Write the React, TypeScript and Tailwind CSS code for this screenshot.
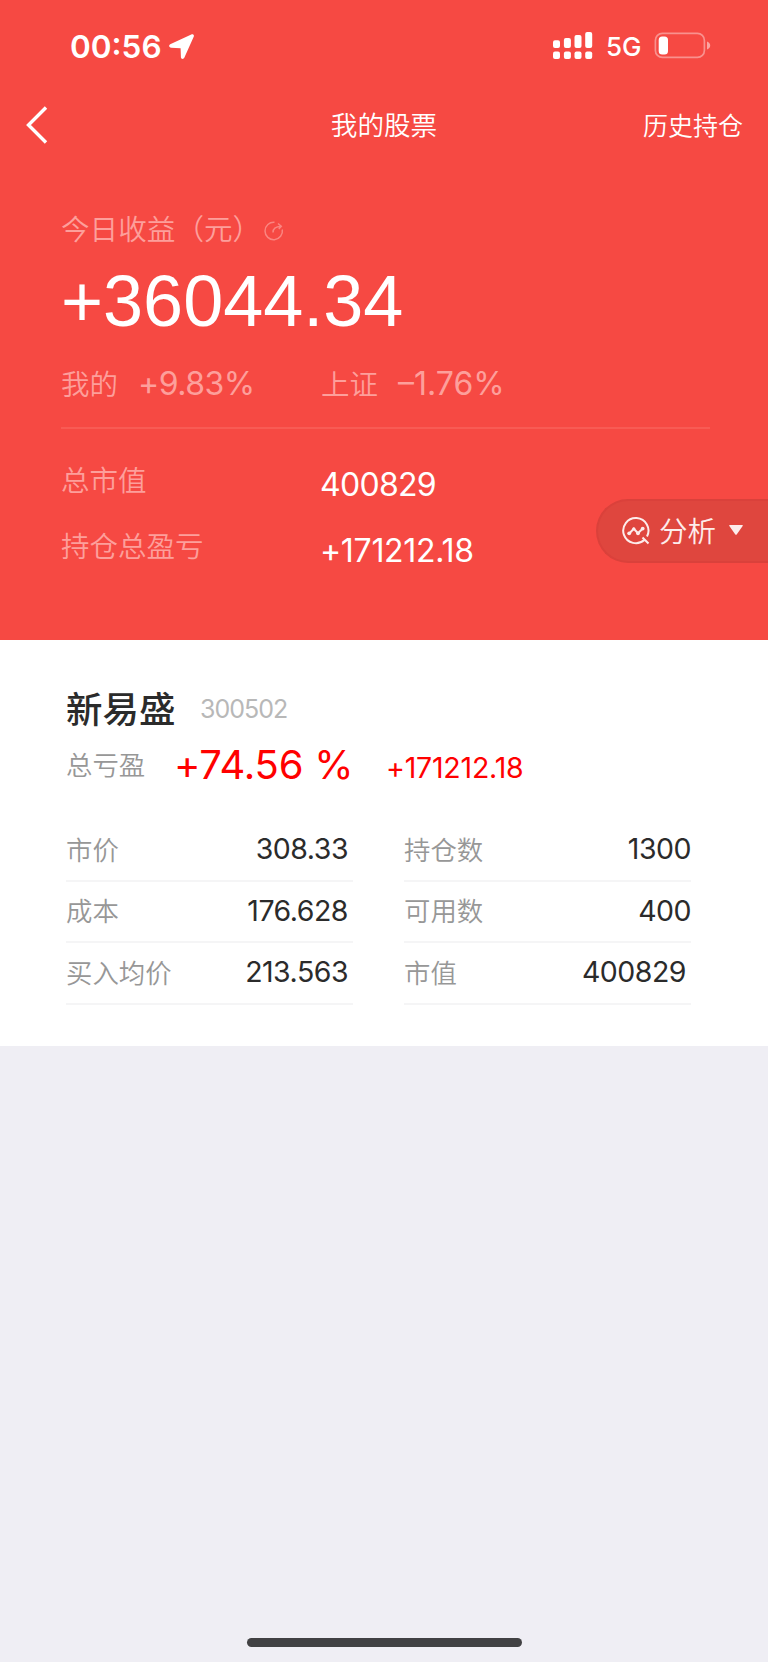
import React from "react";

const cjk = "font-['Noto_Sans_CJK_SC',sans-serif] font-[350] whitespace-nowrap leading-none";
const num = "font-['Inter',sans-serif] whitespace-nowrap leading-none";

function StatusBar() {
  return (
    <div className="flex h-[80px] items-start pt-[30px] text-white">
      <div className={`${num} ml-[70px] mt-[1px] h-[32px] w-[99px] text-[31.500px] font-semibold`}>00:56</div>
      <svg className="mt-[4px] h-[26px] w-[26px]" viewBox="0 0 26 26" fill="currentColor">
        <path d="M1.2 10.2 22.3.4c1.8-.8 3.2.6 2.4 2.4L15.3 23.8c-.8 1.7-3.3 1.3-3.4-.6l-.3-9-9.4-.5c-2.200-.2-2.800-2.600-1-3.500Z" />
      </svg>
      <svg className="ml-[358px] mt-[2px] h-[28px] w-[40px]" viewBox="0 0 40 28" fill="currentColor">
        <rect x="0" y="8.200" width="7" height="7.800" rx="2" />
        <rect x="10.900" y="6" width="7" height="10" rx="2" />
        <rect x="21.500" y="3" width="7" height="13" rx="2" />
        <rect x="32.200" y="0" width="7" height="16" rx="2" />
        <rect x="0" y="19.600" width="7" height="7.400" rx="2" />
        <rect x="10.900" y="19.600" width="7" height="7.400" rx="2" />
        <rect x="21.500" y="19.600" width="7" height="7.400" rx="2" />
        <rect x="32.200" y="19.600" width="7" height="7.400" rx="2" />
      </svg>
      <div className={`${num} ml-[13px] mt-[4px] w-[48px] text-[26px] font-medium`}>5G</div>
      <svg className="mt-[2px] h-[27px] w-[58px]" viewBox="0 0 58 27">
        <rect x="1.400" y="1.400" width="49" height="24" rx="7" fill="none" stroke="white" strokeOpacity=".4" strokeWidth="1.700" />
        <rect x="4.700" y="4.500" width="9.300" height="18" rx="3.500" fill="white" />
        <path d="M53 9.500c4.300 1.500 4.300 6.500 0 8Z" fill="white" fillOpacity=".5" />
      </svg>
    </div>
  );
}

function NavBar() {
  return (
    <div className="grid h-[90px] grid-cols-3 items-center text-white">
      <svg className="ml-[25px] h-[38px] w-[24px]" viewBox="0 0 24 38" fill="none" stroke="currentColor" strokeWidth="3.400">
        <path d="M21 1.500 3.500 19 21 36.500" />
      </svg>
      <div className={`${cjk} pb-[2px] text-center text-[26.600px]`}>我的股票</div>
      <div className={`${cjk} mr-[25px] pb-[2px] text-right text-[25px]`}>历史持仓</div>
    </div>
  );
}

function AnalysisButton() {
  return (
    <button className="absolute right-0 top-[499px] flex h-[64px] w-[172px] items-center rounded-l-full border-2 border-r-0 border-[#da413b] bg-[#df463e] pl-[24px] text-[#fdeceb]">
      <svg className="h-[28px] w-[28px]" viewBox="0 0 28 28" fill="none" stroke="currentColor" strokeWidth="2">
        <path d="M22.500 22.800A12.600 12.600 0 1 1 25 19.500M20.500 20.500 26.500 26.500" />
        <path d="m7.500 16.300 4.300-4.500 4.200 4.500 4.500-4.500" />
        <g fill="currentColor" stroke="none">
          <circle cx="7.200" cy="16.300" r="1.900" />
          <circle cx="11.800" cy="11.800" r="1.600" />
          <circle cx="16" cy="16.300" r="1.900" />
          <circle cx="20.700" cy="11.600" r="1.900" />
        </g>
      </svg>
      <span className={`${cjk} ml-[9px] pb-[2px] text-[28.500px]`}>分析</span>
      <svg className="ml-[13px] mb-[2px] h-[10px] w-[14px]" viewBox="0 0 13 10" preserveAspectRatio="none" fill="currentColor">
        <path d="M.8 0h11.400q1.200 0 .5 1L7.300 9.300q-.8 1.100-1.600 0L.3 1Q-.4 0 .8 0Z" />
      </svg>
    </button>
  );
}

function Summary() {
  return (
    <section className="h-[470px] pl-[61px] text-[#fd9f9b]">
      <div className="mt-[44px] flex h-[30px] items-center">
        <span className={`${cjk} pb-[2px] text-[28.600px]`}>今日收益（元）</span>
        <svg className="ml-[3px] mt-[4px] h-[20px] w-[20px] opacity-70" viewBox="0 0 20 20" fill="none" stroke="currentColor" strokeWidth="1.500">
          <path d="M10.500 1.300A8.700 8.700 0 1 0 18.300 8.500M9 11.500C9 7.500 12 5.500 17 5.500M14 2.500 17.300 5.400 14.800 8" />
        </svg>
      </div>
      <div className="mt-[21px] h-[72px] whitespace-nowrap font-['Liberation_Sans',sans-serif] text-[72px] leading-none text-white">+36044.34</div>
      <div className="mt-[31px] flex h-[32px] items-center">
        <span className={`${cjk} w-[77px] pb-[2px] text-[28.500px]`}>我的</span>
        <span className={`${num} w-[183px] text-[32px] tracking-[-0.5px]`}>+9.83%</span>
        <span className={`${cjk} w-[77px] pb-[2px] text-[28.500px]`}>上证</span>
        <span className={`${num} text-[32px]`}>–1.76%</span>
      </div>
      <div className="mt-[27px] h-[2px] w-[649px] bg-[#f85b54]" />
      <div className="mt-[37px] flex h-[32px] items-center">
        <span className={`${cjk} w-[259px] pb-[5px] text-[28.500px]`}>总市值</span>
        <span className={`${num} pt-[5px] text-[32px] tracking-[-0.7px] text-white`}>400829</span>
      </div>
      <div className="mt-[34px] flex h-[32px] items-center">
        <span className={`${cjk} w-[259px] pb-[5px] text-[28.500px]`}>持仓总盈亏</span>
        <span className={`${num} pt-[5px] text-[32px] tracking-[-0.3px] text-white`}>+171212.18</span>
      </div>
    </section>
  );
}

type Item = { label: string; value: string; inset?: boolean };

const columns: Item[][] = [
  [
    { label: "市价", value: "308.33", inset: true },
    { label: "成本", value: "176.628", inset: true },
    { label: "买入均价", value: "213.563", inset: true },
  ],
  [
    { label: "持仓数", value: "1300" },
    { label: "可用数", value: "400" },
    { label: "市值", value: "400829", inset: true },
  ],
];

function Holding() {
  return (
    <section className="h-[406px] bg-white px-[66px] pt-[48px] text-[#2b2b2b]">
      <div className="flex h-[40px] items-center">
        <h2 className="w-[134px] whitespace-nowrap font-['Noto_Sans_CJK_SC',sans-serif] text-[36.500px] font-medium leading-none">新易盛</h2>
        <span className={`${num} pt-[2px] text-[25px] tracking-[-1px] text-[#b8b8b8]`}>300502</span>
      </div>
      <div className="mt-[16px] flex h-[40px] items-center">
        <span className={`${cjk} w-[108px] text-[26.400px] text-[#979797]`}>总亏盈</span>
        <span className={`${num} w-[212px] pt-[1px] text-[40px] tracking-[-0.2px] text-[#ff0000]`}>+74.56 %</span>
        <span className={`${num} mt-[9px] text-[28.500px] tracking-[-0.2px] text-[#ff0000]`}>+171212.18</span>
      </div>
      <div className="mt-[36px] flex gap-[51px]">
        {columns.map((items, i) => (
          <div key={i} className="w-[287px]">
            {items.map(({ label, value, inset }) => (
              <div key={label} className="flex h-[61.500px] items-center justify-between border-b-2 border-[#f5f5f6]">
                <span className={`${cjk} pb-[2px] text-[26.400px] text-[#979797]`}>{label}</span>
                <span className={`${num} pb-[1px] text-[28.500px] tracking-[-0.5px] ${inset ? "pr-[5px]" : ""}`}>{value}</span>
              </div>
            ))}
          </div>
        ))}
      </div>
    </section>
  );
}

export default function App() {
  return (
    <main className="relative flex h-[1662px] w-[768px] flex-col overflow-hidden bg-[#efeef4]">
      <header className="h-[640px] bg-[#f64943]">
        <StatusBar />
        <NavBar />
        <Summary />
      </header>
      <Holding />
      <div className="mx-auto mb-[15px] mt-auto h-[9px] w-[275px] rounded-full bg-[#414143]" />
      <AnalysisButton />
    </main>
  );
}
